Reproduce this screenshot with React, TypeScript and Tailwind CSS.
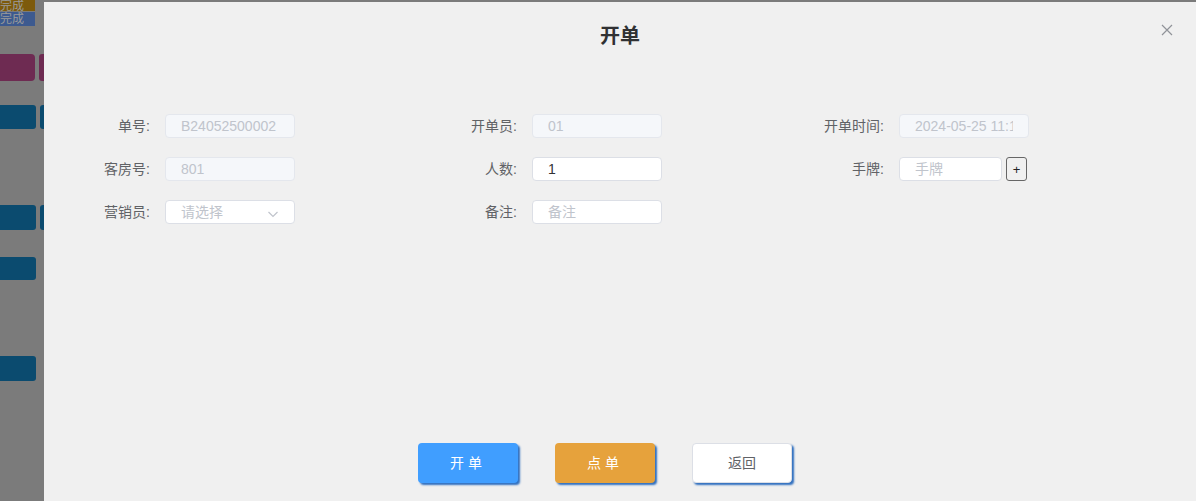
import React from "react";

const font = "font-['Liberation_Sans','Noto_Sans_CJK_SC',sans-serif]";

interface Field {
  label: string;
  kind: "disabled" | "text" | "select" | "tag";
  value?: string;
  placeholder?: string;
}

const fields: Field[] = [
  { label: "单号:", kind: "disabled", value: "B24052500002" },
  { label: "开单员:", kind: "disabled", value: "01" },
  { label: "开单时间:", kind: "disabled", value: "2024-05-25 11:15:32" },
  { label: "客房号:", kind: "disabled", value: "801" },
  { label: "人数:", kind: "text", value: "1" },
  { label: "手牌:", kind: "tag", placeholder: "手牌" },
  { label: "营销员:", kind: "select", placeholder: "请选择" },
  { label: "备注:", kind: "text", placeholder: "备注" },
];

const inputBase =
  "h-[24px] rounded-[4px] border pl-[15px] pr-[15px] text-[14px] outline-none " + font;

function FieldInput({ field }: { field: Field }) {
  if (field.kind === "disabled") {
    return (
      <input
        readOnly
        value={field.value}
        className={`${inputBase} w-[130px] border-[#e4e7ed] bg-[#f5f7fa] text-[#c0c4cc]`}
      />
    );
  }
  if (field.kind === "select") {
    return (
      <div className="flex h-[24px] w-[130px] items-center justify-between rounded-[4px] border border-[#dcdfe6] bg-white pl-[15px] pr-[15px]">
        <span className="text-[14px] text-[#c0c4cc]">{field.placeholder}</span>
        <svg width="12" height="12" viewBox="0 0 12 12" className="mt-[3px]">
          <path d="M1.5 4l4.5 4.5L10.5 4" fill="none" stroke="#c0c4cc" strokeWidth="1.2" />
        </svg>
      </div>
    );
  }
  if (field.kind === "tag") {
    return (
      <div className="flex items-center gap-[4px]">
        <input
          placeholder={field.placeholder}
          className={`${inputBase} w-[103px] border-[#dcdfe6] bg-white text-[#606266] placeholder:text-[#c0c4cc]`}
        />
        <button className="flex h-[24px] w-[21px] items-center justify-center rounded-[3px] border border-[#666] bg-[#f0f0f0] text-[13px] leading-none text-[#222]">
          +
        </button>
      </div>
    );
  }
  return (
    <input
      defaultValue={field.value}
      placeholder={field.placeholder}
      className={`${inputBase} w-[130px] border-[#dcdfe6] bg-white text-[#333] placeholder:text-[#c0c4cc]`}
    />
  );
}

export default function App() {
  return (
    <div className={`flex h-[501px] w-[1196px] overflow-hidden bg-[#7b7b7b] ${font}`}>
      {/* dimmed page behind the dialog */}
      <div className="flex w-[44px] shrink-0 flex-col">
        <div className="flex h-[11px] w-[35px] items-center overflow-hidden bg-[#7d5a0b] text-[12px] leading-none text-[#9a9a9a]">
          完成
        </div>
        <div className="mt-[1px] flex h-[14px] w-[35px] items-center overflow-hidden bg-[#3d5a8f] text-[12px] leading-none text-[#9a9a9a]">
          完成
        </div>
        <div className="mt-[28px] flex h-[27px] gap-[4px]">
          <div className="w-[35px] rounded-r-[4px] bg-[#6e2b52]" />
          <div className="w-[5px] rounded-l-[3px] bg-[#6e2b52]" />
        </div>
        <div className="mt-[24px] flex h-[24px] gap-[4px]">
          <div className="w-[36px] rounded-r-[3px] bg-[#0b4b6f]" />
          <div className="w-[4px] rounded-l-[3px] bg-[#0b4b6f]" />
        </div>
        <div className="mt-[76px] flex h-[25px] gap-[4px]">
          <div className="w-[36px] rounded-r-[3px] bg-[#0b4b6f]" />
          <div className="w-[4px] rounded-l-[3px] bg-[#0b4b6f]" />
        </div>
        <div className="mt-[27px] h-[23px] w-[36px] rounded-r-[3px] bg-[#0b4b6f]" />
        <div className="mt-[76px] h-[25px] w-[36px] rounded-r-[3px] bg-[#0b4b6f]" />
      </div>

      {/* dialog */}
      <div className="relative mt-[2px] flex flex-1 flex-col bg-[#f0f0f0]">
        <h2 className="pt-[22px] text-center text-[20px] font-bold leading-[24px] text-[#303133]">
          开单
        </h2>
        <button className="absolute right-[22px] top-[21px] text-[#909399]">
          <svg width="14" height="14" viewBox="0 0 14 14">
            <path d="M2 2l10 10M12 2L2 12" stroke="#909399" strokeWidth="1.2" />
          </svg>
        </button>

        <div className="mt-[66px] grid grid-cols-[367px_367px_367px] gap-y-[19px] pl-[26px]">
          {fields.map((field, i) => (
            <div key={i} className="flex h-[24px] items-center">
              <label className="w-[80px] text-right text-[14px] text-[#606266]">{field.label}</label>
              <div className="ml-[15px]">
                <FieldInput field={field} />
              </div>
            </div>
          ))}
        </div>

        <div className="mt-[219px] flex justify-center gap-[37px] pr-[30px]">
          <button className="h-[40px] w-[100px] rounded-[4px] bg-[#409eff] text-[14px] tracking-[4px] text-white shadow-[2px_2px_2px_#2f6fbf]">
            开单
          </button>
          <button className="h-[40px] w-[100px] rounded-[4px] bg-[#e6a23c] text-[14px] tracking-[4px] text-white shadow-[2px_2px_2px_#2f6fbf]">
            点单
          </button>
          <button className="h-[40px] w-[100px] rounded-[4px] border border-[#dcdfe6] bg-white text-[14px] text-[#606266] shadow-[2px_2px_2px_#2f6fbf]">
            返回
          </button>
        </div>
      </div>
    </div>
  );
}
